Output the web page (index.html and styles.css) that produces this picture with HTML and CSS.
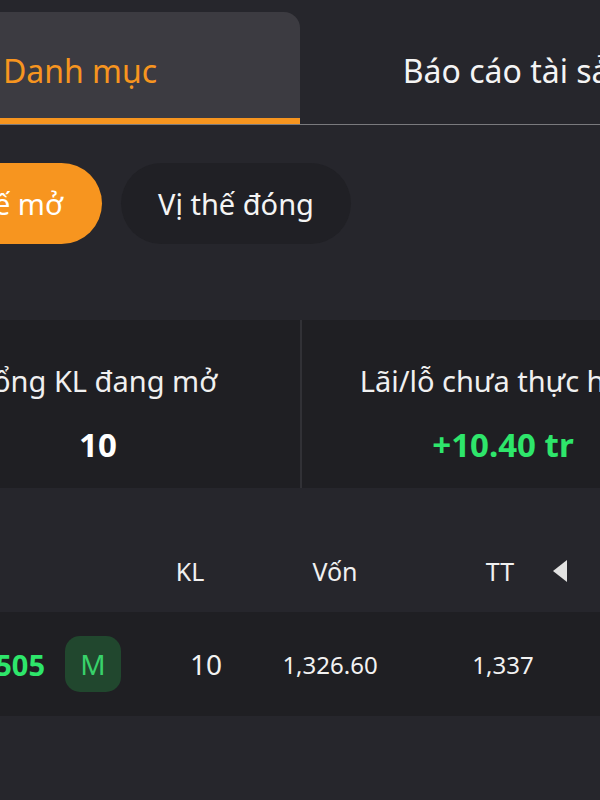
FILE: index.html
```html
<!DOCTYPE html>
<html lang="vi">
<head>
    <meta charset="UTF-8">
    <meta name="viewport" content="width=device-width, initial-scale=1.0">
    <title>Danh mục</title>
    <link rel="stylesheet" href="styles.css">
</head>
<body>
    <div class="screen">
        <div class="tabs">
            <div class="tab active">Danh mục</div>
            <div class="tab">Báo cáo tài sản</div>
        </div>

        <div class="pills">
            <div class="pill on">Vị thế mở</div>
            <div class="pill">Vị thế đóng</div>
        </div>

        <div class="stats">
            <div class="stat">
                <div class="stat-label">Tổng KL đang mở</div>
                <div class="stat-value">10</div>
            </div>
            <div class="stat">
                <div class="stat-label">Lãi/lỗ chưa thực hiện</div>
                <div class="stat-value up">+10.40 tr</div>
            </div>
        </div>

        <div class="head-row">
            <div></div>
            <div class="col">KL</div>
            <div class="col">Vốn</div>
            <div class="col tt">TT</div>
            <div class="col arrow"><span class="tri"></span></div>
        </div>

        <div class="data-row">
            <div class="sym">
                <span class="code up">VN30F2505</span>
                <span class="side">M</span>
            </div>
            <div class="cell big">10</div>
            <div class="cell">1,326.60</div>
            <div class="cell">1,337</div>
        </div>
    </div>
</body>
</html>
```

FILE: styles.css
```css
* {
    margin: 0;
    padding: 0;
    box-sizing: border-box;
}
html, body {
    background: #26262c;
    overflow: hidden;
}
body {
    font-family: "Noto Sans", "Liberation Sans", sans-serif;
    color: #f2f2f2;
    width: 600px;
    height: 800px;
}
.screen {
    width: 600px;
    height: 800px;
    overflow: hidden;
}

/* tab bar */
.tabs {
    display: flex;
    align-items: flex-end;
    margin-left: -140px;
    width: 880px;
    padding-top: 12px;
    border-bottom: 1px solid #7a7a7e;
}
.tab {
    width: 440px;
    height: 112px;
    padding-top: 10px;
    padding-bottom: 6px;
    display: flex;
    align-items: center;
    justify-content: center;
    font-size: 32px;
    color: #f4f4f4;
    white-space: nowrap;
}
.tab + .tab {
    margin-left: -4px;
}
.tab.active {
    background: #3c3b41;
    color: #f7951f;
    padding-bottom: 0;
    border-top-right-radius: 16px;
    border-bottom: 6px solid #f7951f;
}

/* position switch */
.pills {
    display: flex;
    gap: 19px;
    margin-top: 38px;
    margin-left: -106px;
}
.pill {
    height: 81px;
    padding: 0 37px;
    border-radius: 41px;
    background: #202025;
    display: flex;
    align-items: center;
    justify-content: center;
    font-size: 29px;
    color: #f4f4f4;
    white-space: nowrap;
}
.pill.on {
    width: 208px;
    background: #f7951f;
    color: #fff;
}

/* summary */
.stats {
    display: flex;
    margin-top: 76px;
    margin-left: -104px;
    width: 808px;
    height: 168px;
    background: #1f1f23;
}
.stat {
    width: 404px;
    display: flex;
    flex-direction: column;
    align-items: center;
    padding-top: 41px;
    gap: 22px;
    white-space: nowrap;
}
.stat + .stat {
    border-left: 2px solid #313136;
}
.stat-label {
    font-size: 29px;
    color: #f0f0f0;
}
.stat-value {
    font-size: 33px;
    font-weight: bold;
    color: #fff;
}
.up {
    color: #2ee66b !important;
}

/* table */
.head-row {
    display: grid;
    grid-template-columns: 140px 100px 190px 130px 40px;
    align-items: center;
    height: 124px;
    padding-top: 42px;
    font-size: 25px;
    color: #f0f0f0;
}
.col {
    text-align: center;
}
.col.tt {
    padding-left: 10px;
}
.col.arrow {
    display: flex;
    margin-left: -7px;
}
.tri {
    width: 0;
    height: 0;
    border-top: 11px solid transparent;
    border-bottom: 11px solid transparent;
    border-right: 14px solid #e2e2e2;
}

.data-row {
    display: grid;
    grid-template-columns: 140px 132px 116px 230px;
    align-items: center;
    height: 104px;
    background: #1f1f23;
    width: 618px;
}
.sym {
    display: flex;
    align-items: center;
    justify-content: flex-end;
    gap: 20px;
    padding-right: 19px;
    white-space: nowrap;
    min-width: 0;
}
.code {
    flex-shrink: 0;
    font-size: 29px;
    font-weight: bold;
}
.side {
    flex-shrink: 0;
    width: 56px;
    height: 56px;
    border-radius: 15px;
    background: #21472e;
    color: #38d26a;
    font-size: 28px;
    display: flex;
    align-items: center;
    justify-content: center;
}
.cell {
    text-align: center;
    font-size: 24px;
    color: #f2f2f2;
}
.cell.big {
    font-size: 28px;
}
```
